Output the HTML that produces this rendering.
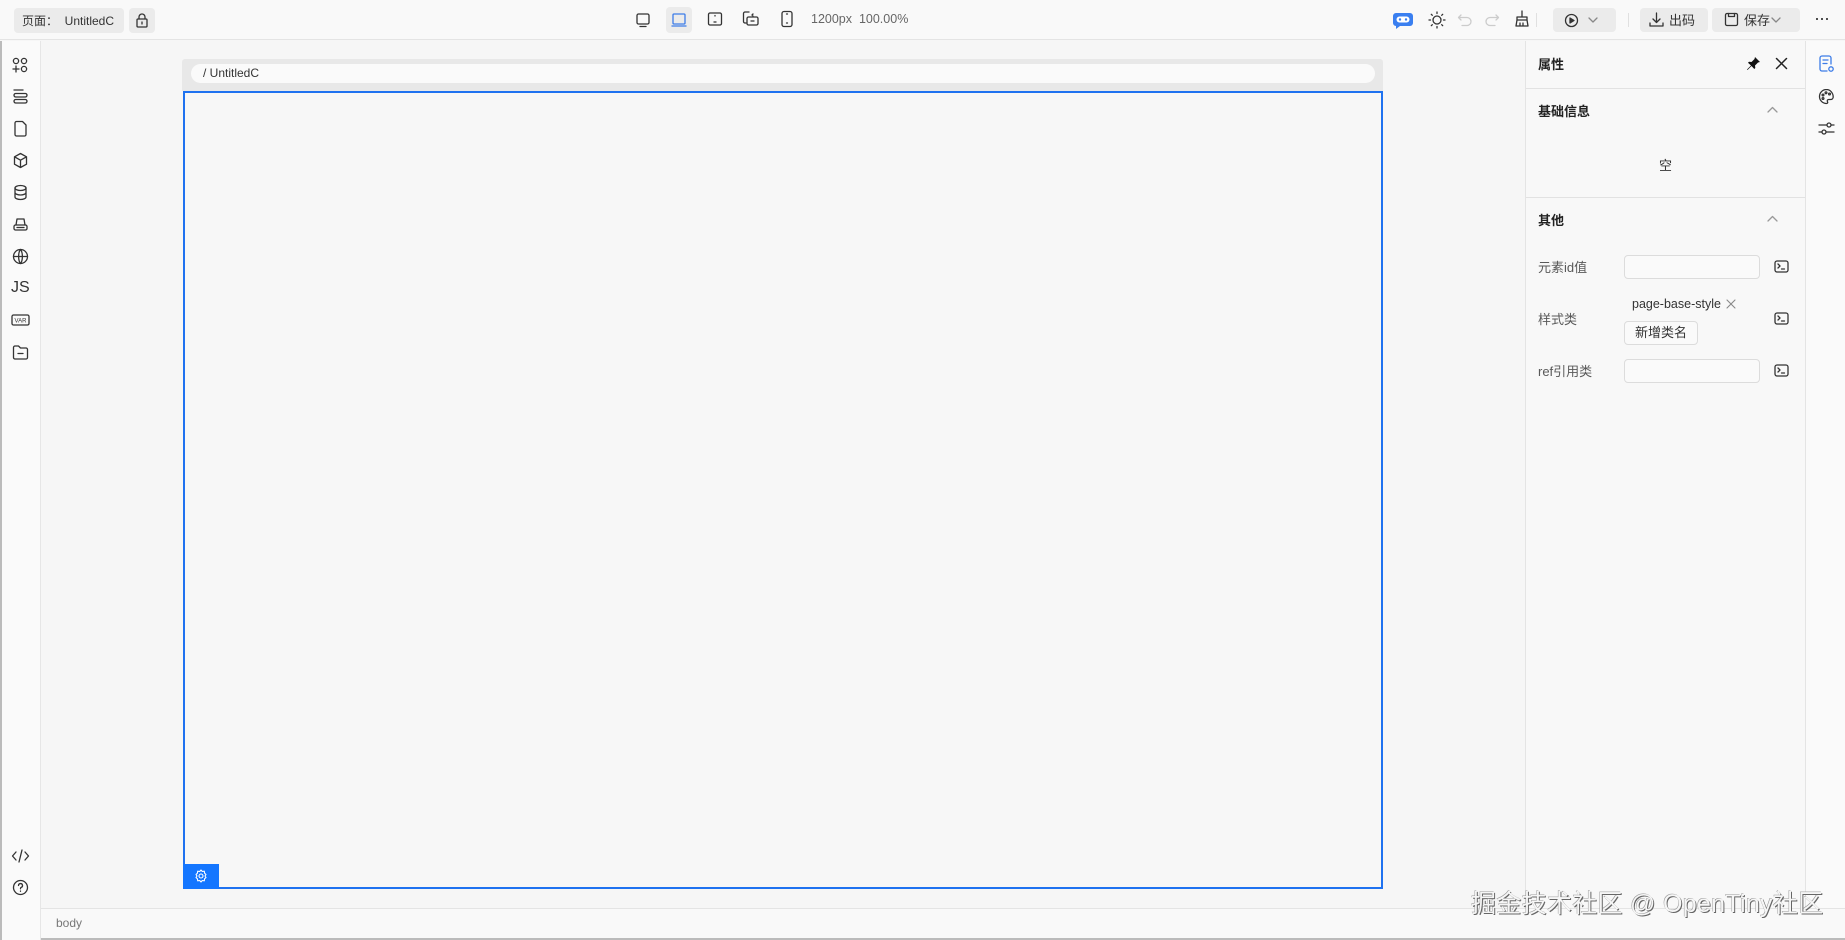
<!DOCTYPE html>
<html><head><meta charset="utf-8"><style>
*{box-sizing:border-box;margin:0;padding:0}
body{width:1845px;height:940px;overflow:hidden;background:#f6f6f6;font-family:"Liberation Sans","Noto Sans CJK SC",sans-serif;color:#252b3a;position:relative;font-size:12px}
.a{position:absolute}
svg{position:absolute;fill:none;stroke:#333;stroke-width:1.3;stroke-linecap:round;stroke-linejoin:round}
.top{left:0;top:0;width:1845px;height:40px;background:#f9f9f9;border-bottom:1px solid #e4e4e4}
.btn{background:#ebebeb;border-radius:4px}
.lab{color:#595959;font-size:13px}
</style></head><body>
<div class="a top"></div>
<div class="a btn" style="left:14px;top:8px;width:110px;height:25px"></div>
<div class="a" style="left:22px;top:12px;font-size:12px;color:#333">页面：&nbsp; UntitledC</div>
<div class="a btn" style="left:129px;top:8px;width:26px;height:25px"></div>
<svg style="left:135px;top:13px" width="14" height="15" viewBox="0 0 14 15"><rect x="2" y="6" width="10" height="8" rx="1"/><path d="M4 6V4a3 3 0 0 1 6 0v2M7 9v2"/></svg>

<div class="a btn" style="left:666px;top:7px;width:26px;height:26px"></div>
<svg style="left:635px;top:12px" width="16" height="16" viewBox="0 0 16 16"><rect x="2" y="2" width="12" height="10" rx="1.5"/><path d="M5 14.5h6"/></svg>
<svg style="left:671px;top:12px;stroke:#3c7ce8" width="16" height="16" viewBox="0 0 16 16"><rect x="2" y="2" width="12" height="10" rx="1"/><path d="M1 14h14"/></svg>
<svg style="left:707px;top:11px" width="16" height="16" viewBox="0 0 16 16"><rect x="1.5" y="2" width="13" height="12" rx="1.5"/><path d="M7 11h2M8 4.5v.5"/></svg>
<svg style="left:742px;top:11px" width="18" height="16" viewBox="0 0 18 16"><rect x="5" y="6" width="11" height="8" rx="1.5"/><path d="M4 12H3a1.5 1.5 0 0 1-1.5-1.5v-8A1.5 1.5 0 0 1 3 1h4M9 10h3M11 3l-1 1 1 1"/></svg>
<svg style="left:779px;top:10px" width="16" height="18" viewBox="0 0 16 18"><rect x="3" y="1.5" width="10" height="15" rx="2"/><path d="M7.5 13h1M7.5 4h1"/></svg>
<div class="a" style="left:811px;top:12px;color:#666;font-size:12.5px">1200px&nbsp; 100.00%</div>

<svg style="left:1392px;top:9px;stroke:none" width="22" height="22" viewBox="0 0 22 22"><path fill="#3a7ff0" d="M4 4h14a3 3 0 0 1 3 3v7a3 3 0 0 1-3 3H8l-4 3v-3a3 3 0 0 1-3-3V7a3 3 0 0 1 3-3z"/><rect x="4.5" y="7.5" width="13" height="6" rx="3" fill="#fff"/><circle cx="8" cy="10.5" r="1.2" fill="#3a7ff0"/><circle cx="14" cy="10.5" r="1.2" fill="#3a7ff0"/></svg>
<svg style="left:1428px;top:11px" width="18" height="18" viewBox="0 0 18 18"><circle cx="9" cy="9" r="4"/><path d="M9 1v1.5M9 15.5V17M1 9h1.5M15.5 9H17M3.3 3.3l1 1M13.7 13.7l1 1M3.3 14.7l1-1M13.7 4.3l1-1"/></svg>
<svg style="left:1457px;top:12px;stroke:#ccc" width="16" height="16" viewBox="0 0 16 16"><path d="M4 3L1.5 5.5 4 8M2 5.5h8a4 4 0 0 1 0 8H5"/></svg>
<svg style="left:1484px;top:12px;stroke:#ccc" width="16" height="16" viewBox="0 0 16 16"><path d="M12 3l2.5 2.5L12 8M14 5.5H6a4 4 0 0 0 0 8h5"/></svg>
<svg style="left:1514px;top:10px" width="16" height="18" viewBox="0 0 16 18"><path d="M8 1v6M3 7h10v3H3zM3 10l-1 6h12l-1-6M6 13v3M9 13v3"/></svg>
<div class="a" style="left:1536px;top:13px;width:1px;height:14px;background:#e0e0e0"></div>
<div class="a btn" style="left:1553px;top:8px;width:63px;height:24px"></div>
<svg style="left:1564px;top:13px" width="15" height="15" viewBox="0 0 15 15"><circle cx="7.5" cy="7.5" r="6"/><path d="M6 5v5l4-2.5z" fill="#333"/></svg>
<svg style="left:1588px;top:16px;stroke:#888" width="10" height="8" viewBox="0 0 10 8"><path d="M1 2l4 4 4-4"/></svg>
<div class="a" style="left:1628px;top:13px;width:1px;height:14px;background:#e0e0e0"></div>
<div class="a btn" style="left:1640px;top:8px;width:68px;height:24px"></div>
<svg style="left:1649px;top:12px" width="15" height="15" viewBox="0 0 15 15"><path d="M7.5 1v9M4 7l3.5 3.5L11 7M1 11v3h13v-3"/></svg>
<div class="a" style="left:1669px;top:10px;font-size:13px;color:#333">出码</div>
<div class="a btn" style="left:1712px;top:8px;width:88px;height:24px"></div>
<svg style="left:1724px;top:12px" width="15" height="15" viewBox="0 0 15 15"><rect x="1.5" y="1.5" width="12" height="12" rx="1.5"/><path d="M4.5 1.5v3h6v-3"/></svg>
<div class="a" style="left:1744px;top:10px;font-size:13px;color:#333">保存</div>
<svg style="left:1771px;top:16px;stroke:#888" width="10" height="8" viewBox="0 0 10 8"><path d="M1 2l4 4 4-4"/></svg>
<div class="a" style="left:1814px;top:8px;font-size:18px;color:#333;letter-spacing:-1px">···</div>

<!-- left bar -->
<div class="a" style="left:0;top:41px;width:41px;height:899px;background:#fafafa;border-right:1px solid #e6e6e6;border-left:2px solid #bbb"></div>
<svg style="left:12px;top:57px" width="17" height="17" viewBox="0 0 17 17"><circle cx="4" cy="4" r="2.6"/><circle cx="12" cy="4" r="2.6"/><circle cx="12" cy="12" r="2.6"/><path d="M4 9v6M1 12h6"/></svg>
<svg style="left:12px;top:88px" width="17" height="17" viewBox="0 0 17 17"><path d="M2 2h9"/><rect x="2" y="5.5" width="13" height="3.5" rx="1.7"/><rect x="2" y="11.5" width="13" height="3.5" rx="1.7"/></svg>
<svg style="left:12px;top:120px" width="17" height="17" viewBox="0 0 17 17"><path d="M3 3a1.5 1.5 0 0 1 1.5-1.5h6L14 5v9.5a1.5 1.5 0 0 1-1.5 1.5h-8A1.5 1.5 0 0 1 3 14.5z"/></svg>
<svg style="left:12px;top:152px" width="17" height="17" viewBox="0 0 17 17"><path d="M8.5 1.5l6 3.3v7.4l-6 3.3-6-3.3V4.8zM2.5 4.8l6 3.4 6-3.4M8.5 8.2v7.3"/></svg>
<svg style="left:12px;top:184px" width="17" height="17" viewBox="0 0 17 17"><ellipse cx="8.5" cy="4" rx="5.5" ry="2.5"/><path d="M3 4v9c0 1.4 2.5 2.5 5.5 2.5S14 14.4 14 13V4M3 8.5c0 1.4 2.5 2.5 5.5 2.5S14 9.9 14 8.5"/></svg>
<svg style="left:12px;top:216px" width="17" height="17" viewBox="0 0 17 17"><path d="M4 9l1-6h7l1 6"/><rect x="2" y="9" width="13" height="5" rx="1.5"/><path d="M5 11.5h7"/></svg>
<svg style="left:12px;top:248px" width="17" height="17" viewBox="0 0 17 17"><circle cx="8.5" cy="8.5" r="7"/><path d="M1.5 8.5h14M8.5 1.5c-2.5 3-2.5 11 0 14M8.5 1.5c2.5 3 2.5 11 0 14"/></svg>
<div class="a" style="left:11px;top:279px;font-size:16px;color:#333">JS</div>
<svg style="left:11px;top:314px" width="19" height="12" viewBox="0 0 19 12"><rect x="1" y="1" width="17" height="10" rx="1.5"/><text x="9.5" y="8.5" font-size="6" text-anchor="middle" fill="#333" stroke="none" font-family="Liberation Sans">VAR</text></svg>
<svg style="left:12px;top:344px" width="17" height="17" viewBox="0 0 17 17"><path d="M1.5 3.5a1.5 1.5 0 0 1 1.5-1.5h3.5l2 2h5.5a1.5 1.5 0 0 1 1.5 1.5v8a1.5 1.5 0 0 1-1.5 1.5H3a1.5 1.5 0 0 1-1.5-1.5zM6 9.5h5"/></svg>
<svg style="left:11px;top:848px" width="19" height="16" viewBox="0 0 19 16"><path d="M5 4L1.5 8 5 12M14 4l3.5 4-3.5 4M11 2L8 14"/></svg>
<svg style="left:12px;top:879px" width="17" height="17" viewBox="0 0 17 17"><circle cx="8.5" cy="8.5" r="7"/><path d="M6.5 6.5a2 2 0 1 1 2.5 2c-.5.2-.5.6-.5 1.3M8.5 12v.3"/></svg>

<!-- canvas -->
<div class="a" style="left:182px;top:59px;width:1201px;height:32px;background:#e8e8e8;border-radius:3px 3px 0 0"></div>
<div class="a" style="left:191px;top:64px;width:1184px;height:19px;background:#fafafa;border-radius:10px"></div>
<div class="a" style="left:203px;top:66px;font-size:12px;color:#333">/ UntitledC</div>
<div class="a" style="left:183px;top:91px;width:1200px;height:798px;border:2px solid #1f72f0;background:#f7f7f7"></div>
<div class="a" style="left:183px;top:864px;width:36px;height:25px;background:#1476ff"></div>
<svg style="left:194px;top:869px;stroke:#fff;stroke-width:1.1" width="14" height="14" viewBox="0 0 14 14"><path d="M7 1l1.3 1.5 2-.3.3 2L12 5.5 11 7l1 1.5-1.4 1.3-.3 2-2-.3L7 13l-1.3-1.5-2 .3-.3-2L2 8.5 3 7 2 5.5l1.4-1.3.3-2 2 .3z"/><circle cx="7" cy="7" r="2"/></svg>

<!-- bottom bar -->
<div class="a" style="left:41px;top:908px;width:1804px;height:32px;background:#f9f9f9;border-top:1px solid #e4e4e4;border-bottom:2px solid #bbb"></div>
<div class="a" style="left:56px;top:916px;font-size:12px;color:#777">body</div>

<!-- right panel -->
<div class="a" style="left:1525px;top:41px;width:281px;height:867px;background:#f8f8f8;border-left:1px solid #e4e4e4;border-right:1px solid #e4e4e4"></div>
<div class="a" style="left:1526px;top:88px;width:279px;height:1px;background:#e2e2e2"></div>
<div class="a" style="left:1526px;top:197px;width:279px;height:1px;background:#e2e2e2"></div>
<div class="a" style="left:1538px;top:54px;font-size:13px;font-weight:bold;color:#222">属性</div>
<svg style="left:1746px;top:56px;stroke:none" width="15" height="15" viewBox="0 0 15 15"><path fill="#111" d="M9 1l5 5-2 .5-3 3 .3 2.5-1 1L5.5 10 1.5 14 1 13.5 5 9.5 2 6.7l1-1 2.5.3 3-3z"/></svg>
<svg style="left:1775px;top:57px;stroke:#222;stroke-width:1.5" width="13" height="13" viewBox="0 0 13 13"><path d="M1.5 1.5l10 10M11.5 1.5l-10 10"/></svg>
<div class="a" style="left:1538px;top:101px;font-size:13px;font-weight:bold;color:#222">基础信息</div>
<svg style="left:1767px;top:106px;stroke:#999" width="11" height="8" viewBox="0 0 11 8"><path d="M1 6l4.5-4.5L10 6"/></svg>
<div class="a" style="left:1659px;top:155px;font-size:13px;color:#333">空</div>
<div class="a" style="left:1538px;top:210px;font-size:13px;font-weight:bold;color:#222">其他</div>
<svg style="left:1767px;top:215px;stroke:#999" width="11" height="8" viewBox="0 0 11 8"><path d="M1 6l4.5-4.5L10 6"/></svg>

<div class="a lab" style="left:1538px;top:257px">元素id值</div>
<div class="a" style="left:1624px;top:255px;width:136px;height:24px;border:1px solid #dcdcdc;border-radius:4px;background:#fafafa"></div>
<div class="a lab" style="left:1538px;top:309px">样式类</div>
<div class="a" style="left:1632px;top:297px;font-size:12.5px;color:#333">page-base-style</div>
<svg style="left:1726px;top:299px;stroke:#888;stroke-width:1.1" width="10" height="10" viewBox="0 0 10 10"><path d="M1 1l8 8M9 1l-8 8"/></svg>
<div class="a" style="left:1624px;top:321px;width:74px;height:24px;border:1px solid #dcdcdc;border-radius:4px;background:#fafafa;font-size:13px;color:#333;text-align:center;line-height:21px">新增类名</div>
<div class="a lab" style="left:1538px;top:361px">ref引用类</div>
<div class="a" style="left:1624px;top:359px;width:136px;height:24px;border:1px solid #dcdcdc;border-radius:4px;background:#fafafa"></div>
<svg style="left:1774px;top:260px" width="15" height="13" viewBox="0 0 15 13"><rect x="1" y="1" width="13" height="11" rx="2"/><path d="M4 4l2 2-2 2M7.5 9h3"/></svg>
<svg style="left:1774px;top:312px" width="15" height="13" viewBox="0 0 15 13"><rect x="1" y="1" width="13" height="11" rx="2"/><path d="M4 4l2 2-2 2M7.5 9h3"/></svg>
<svg style="left:1774px;top:364px" width="15" height="13" viewBox="0 0 15 13"><rect x="1" y="1" width="13" height="11" rx="2"/><path d="M4 4l2 2-2 2M7.5 9h3"/></svg>

<!-- right strip -->
<div class="a" style="left:1806px;top:41px;width:39px;height:867px;background:#fafafa"></div>
<svg style="left:1818px;top:55px;stroke:#3c7ce8" width="17" height="18" viewBox="0 0 17 18"><path d="M9 16H4a2 2 0 0 1-2-2V3a2 2 0 0 1 2-2h7a2 2 0 0 1 2 2v6M5 5h5M5 8.5h4"/><circle cx="13" cy="14" r="2.2"/></svg>
<svg style="left:1818px;top:88px" width="17" height="17" viewBox="0 0 17 17"><path d="M8.5 1.5a7 7 0 1 0 0 14c1 0 1.5-.8 1-1.8-.6-1 0-2.2 1.2-2.2h2a2.5 2.5 0 0 0 2.5-2.5c0-4-3-7.5-6.7-7.5z"/><circle cx="5" cy="7" r=".9"/><circle cx="8" cy="4.8" r=".9"/><circle cx="11.5" cy="6" r=".9"/><circle cx="5" cy="10.5" r=".9"/></svg>
<svg style="left:1818px;top:120px" width="17" height="17" viewBox="0 0 17 17"><path d="M1 5h8M13 5h3M1 12h3M8 12h8"/><circle cx="11" cy="5" r="2"/><circle cx="6" cy="12" r="2"/></svg>

<div class="a" style="left:1471px;top:884px;font-size:25px;color:#f6f6f6;text-shadow:1px 1px 0 #666,-0.5px -0.5px 0 #999;font-family:'Liberation Sans','Noto Sans CJK SC',sans-serif;white-space:nowrap;letter-spacing:0.3px">掘金技术社区 @ OpenTiny社区</div>
</body></html>
